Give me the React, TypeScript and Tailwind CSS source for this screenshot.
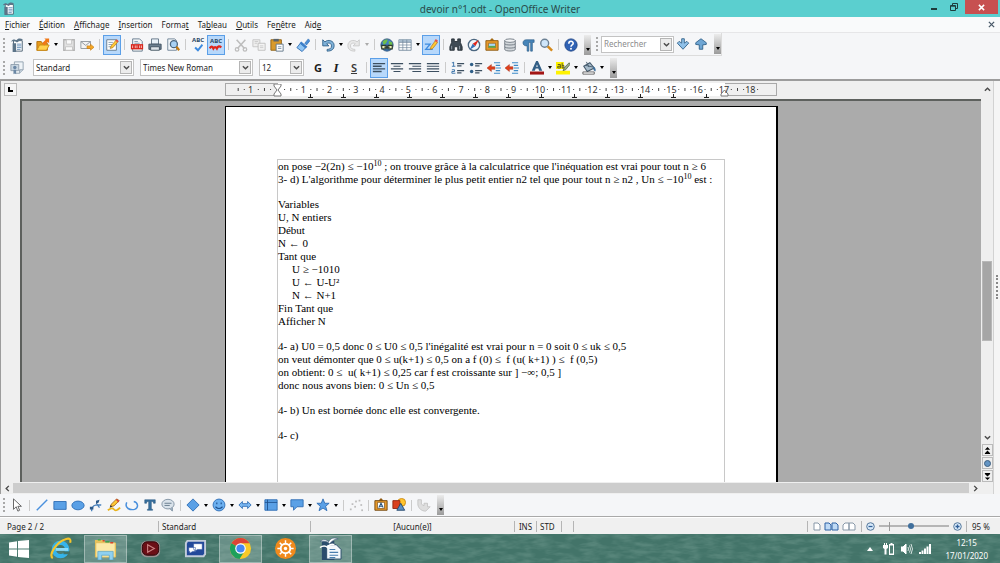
import type { ReactNode } from 'react';

const BLUE = '#5aa0e6';
const EDGE = '#2d6cb4';
const INK = '#3c4f60';

const icons: Record<string, ReactNode> = {
  writer: (
    <>
      <path d="M4 3h10v12H4z" fill="#fff" stroke="#44596b" />
      <path d="M1 4c2-3 5-3 6-1 2-3 5-3 8-1-3 0-4 1-7 3-3-2-4-1-7-1z" fill="#5c7488" />
      <path d="M3 6h4v10H3z" fill="#5c7488" />
      <path d="M8 7h5M8 9h5M8 11h5M8 13h4" stroke="#5b88b5" />
    </>
  ),
  open: (
    <>
      <path d="M1 14V4h5l1 2h6v8z" fill="#e69a1c" stroke="#b06f0c" />
      <path d="M1 14l3-6h11l-3 6z" fill="#ffd24d" stroke="#c98713" />
      <path d="M7 6l4-4-1.500-1.500H15V6l-1.500-1.500-4 4z" fill="#f07818" />
    </>
  ),
  save: (
    <>
      <path d="M2 2h12v12H2z" fill="#e2e2e2" stroke="#b4b4b4" strokeWidth="1.5" />
      <path d="M5 2h6v5H5zM4 10h8v4H4z" fill="#fafafa" stroke="#c2c2c2" />
    </>
  ),
  mail: (
    <>
      <path d="M1 4h11v8H1z" fill="#f3f3f3" stroke="#8b9299" />
      <path d="M1 4l5.500 4.500L12 4" fill="none" stroke="#8b9299" />
      <path d="M8 9h4V7l4 3.500-4 3.500v-2H8z" fill="#f5a623" stroke="#c47a10" strokeWidth=".7" />
    </>
  ),
  edit: (
    <>
      <path d="M2 2h11v12H2z" fill="#fff" stroke="#5c7488" />
      <path d="M4 5h5M4 7.500h4M4 10h3" stroke="#7b93a8" />
      <path d="M6 12l1-3 6-7 2 2-6 7z" fill="#ffc933" stroke="#b3741a" strokeWidth=".8" />
      <path d="M12 3l1.500-1.500 2 2L14 5z" fill="#e2554a" />
    </>
  ),
  pdf: (
    <>
      <path d="M3 1h8l3 3v11H3z" fill="#f4f6f8" stroke="#607588" />
      <path d="M5 4h4M5 6h6" stroke="#7b93a8" />
      <path d="M1 7h14v6H1z" fill="#d8261c" />
      <path d="M3 8.500v3M6 8.500v3M8 8.500v3M11 8.500v3M13 8.500v3" stroke="#fff" strokeWidth=".8" />
    </>
  ),
  print: (
    <>
      <path d="M4 1h8v6H4z" fill="#e9f1f8" stroke="#5c6f80" />
      <path d="M1 7h14v6H1z" fill="#6c7f90" stroke="#3e4f5e" />
      <path d="M3 10h10v4H3z" fill="#dfe5ea" stroke="#3e4f5e" />
    </>
  ),
  preview: (
    <>
      <path d="M2 1h8l2 2v11H2z" fill="#f2f6fa" stroke="#6a7f92" />
      <circle cx="9" cy="7" r="4" fill="#a9d2f5" stroke="#4b6780" strokeWidth="1.500" />
      <path d="M12 10l3 4" stroke="#c47a10" strokeWidth="2.500" />
    </>
  ),
  check: <path d="M2 8l5 5 8-10" fill="none" stroke="#3d8be0" strokeWidth="3.500" />,
  wave: <path d="M1 13q2-4 4 0 2-3 4 0 2-4 5-1" fill="none" stroke="#e0261c" strokeWidth="2.600" />,
  cut: (
    <>
      <path d="M3 2l9 10M13 2L4 12" stroke="#bdbdbd" strokeWidth="1.800" />
      <circle cx="3.500" cy="13" r="2" fill="none" stroke="#bdbdbd" strokeWidth="1.500" />
      <circle cx="12.500" cy="13" r="2" fill="none" stroke="#bdbdbd" strokeWidth="1.500" />
    </>
  ),
  copy: (
    <>
      <path d="M1 2h8v8H1z" fill="#eee" stroke="#c4c4c4" />
      <path d="M7 6h8v8H7z" fill="#f4f4f4" stroke="#bdbdbd" />
      <path d="M3 4h4M3 6h3M9 9h4M9 11h4" stroke="#c8c8c8" />
    </>
  ),
  paste: (
    <>
      <path d="M1 2h12v12H1z" fill="#d99a2b" stroke="#8d5f14" />
      <path d="M4 1h6v3H4z" fill="#59636c" />
      <path d="M7 7h8v8H7z" fill="#fff" stroke="#5b7186" />
      <path d="M9 10h4M9 12h4" stroke="#7b93a8" />
    </>
  ),
  brush: (
    <>
      <path d="M10 6l4-5 2 2-4 5z" fill="#4b8fd6" stroke="#2d6cb4" strokeWidth=".7" />
      <path d="M5 6l6 5-4 4.500L1 11z" fill="#8fc6f5" stroke="#2d6cb4" />
      <path d="M6 4l7 6-2 2L4 6z" fill="#3b7fc9" />
    </>
  ),
  undo: <path d="M2 2v7h7L6.500 6.500C9 5 12 6 12 9s-2 4-5 4v2c5 0 8-2 8-6.500C15 3 8 1 4.500 4.500z" fill="#7fb2d9" stroke="#2f5f88" />,
  redo: <path d="M14 2v7H7l2.500-2.500C7 5 4 6 4 9s2 4 5 4v2c-5 0-8-2-8-6.500C1 3 8 1 11.500 4.500z" fill="#e8e8e8" stroke="#c8c8c8" />,
  globe: (
    <>
      <circle cx="8" cy="8" r="7" fill="#3e7fc4" stroke="#274d73" />
      <path d="M3 4q3-3 6-2l-2 4-3 2zM10 3l4 2v4l-4-2z" fill="#6fbf4a" />
      <path d="M2 8.500h5v4H2zM9 8.500h5v4H9z" fill="#e6ecb4" stroke="#2c3a30" strokeWidth="1.300" />
      <path d="M5 10.500h6" stroke="#2c3a30" strokeWidth="1.500" />
    </>
  ),
  table: (
    <>
      <path d="M1 2h14v12H1z" fill="#fff" stroke="#71879b" />
      <path d="M1 2h14v3H1z" fill="#a8bccd" />
      <path d="M1 5h14M1 8h14M1 11h14M5.500 2v12M10 2v12" stroke="#71879b" strokeWidth=".8" />
    </>
  ),
  draw: (
    <>
      <path d="M1 7h6L2 13h8" fill="none" stroke="#3d8be0" strokeWidth="1.500" />
      <path d="M7 13l1-3 5-7 2.500 2-5.500 7z" fill="#ffc933" stroke="#b3741a" strokeWidth=".8" />
      <path d="M12 3l1.500-2 2.500 2-1.500 2z" fill="#e2554a" />
    </>
  ),
  binoculars: (
    <>
      <path d="M3 1h3v3h4V1h3v4l2 5v4h-5v-4H6v4H1v-4l2-5z" fill="#3f4b55" stroke="#252e36" />
      <path d="M3 9v4M12 9v4" stroke="#8f9ca7" />
    </>
  ),
  compass: (
    <>
      <circle cx="8" cy="8" r="6.500" fill="#eef5fb" stroke="#4b6780" strokeWidth="1.500" />
      <path d="M13.500 2L9.500 9.500 6.500 6.500z" fill="#e0261c" />
      <path d="M3 13.500l3.500-7 3 3z" fill="#3470b8" />
    </>
  ),
  picture: (
    <>
      <path d="M8 0l3 3H5z" fill="#a56a12" />
      <path d="M1 3h14v11H1z" fill="#e6992a" stroke="#8d5810" />
      <path d="M4 6h8v5H4z" fill="#a8d5f7" stroke="#8d5810" strokeWidth=".7" />
      <path d="M4 9h8v2H4z" fill="#59a84a" />
    </>
  ),
  db: (
    <>
      <path d="M2 3v10c0 2.500 12 2.500 12 0V3z" fill="#d3d8dc" stroke="#6b757e" />
      <ellipse cx="8" cy="3" rx="6" ry="2" fill="#f2f4f6" stroke="#6b757e" />
      <path d="M2 6.500c0 2 12 2 12 0M2 10c0 2 12 2 12 0" fill="none" stroke="#6b757e" />
    </>
  ),
  pilcrow: <path d="M15 2H6C1 2 1 9 6 9h1v6h2V5h2v10h2V5h2z" fill="#4684b8" stroke="#2c5a84" strokeWidth=".7" />,
  zoom: (
    <>
      <circle cx="6.500" cy="6" r="4.500" fill="#cfe6fa" stroke="#6c8194" strokeWidth="1.600" />
      <path d="M10 9.500l5 5" stroke="#d58a1c" strokeWidth="2.800" />
    </>
  ),
  help: (
    <>
      <circle cx="8" cy="8" r="7" fill="#2f62b5" stroke="#1d4485" />
      <path d="M5.500 6.500c0-3.500 5-3.500 5-.5 0 2-2.500 1.800-2.500 4" fill="none" stroke="#fff" strokeWidth="1.800" />
      <circle cx="8" cy="12.300" r="1.100" fill="#fff" />
    </>
  ),
  down: <path d="M6.500 2h3v5l3-2 2 2L8 14 1.500 7l2-2 3 2z" fill="#8fc0e8" stroke="#2f6088" />,
  up: <path d="M6 14h4V9l4-.5V6.500L8 2 2 6.500v2L6 9z" fill="#6fa6d4" stroke="#2f6088" />,
  styles: (
    <>
      <path d="M5 1h10v9l-4 4H5z" fill="#eef3f7" stroke="#8d9dab" />
      <path d="M11 14v-4h4" fill="#c9d6e0" stroke="#8d9dab" />
      <path d="M1 4h9v7H1z" fill="#c9d6e0" stroke="#8d9dab" />
      <circle cx="5.500" cy="7.500" r="2" fill="#6b88a6" />
      <path d="M4 10v5l1.500-1L7 15v-5" fill="#6b88a6" />
    </>
  ),
  left: <path d="M1 3h14M1 6h10M1 9h14M1 12h10" stroke={INK} strokeWidth="1.500" />,
  center: <path d="M1 3h14M4 6h8M1 9h14M4 12h8" stroke={INK} strokeWidth="1.300" />,
  right: <path d="M1 3h14M5 6h10M1 9h14M5 12h10" stroke={INK} strokeWidth="1.300" />,
  justify: <path d="M1 3h14M1 6h14M1 9h14M1 12h14" stroke={INK} strokeWidth="1.300" />,
  numbers: (
    <>
      <path d="M3 1v5M1 2h2M1 6h4M1 10h3v2H1v2h4" fill="none" stroke="#2f6ca5" />
      <path d="M7 3h8M7 5.500h5M7 11h8M7 13.500h5" stroke={INK} strokeWidth="1.300" />
    </>
  ),
  bullets: (
    <>
      <circle cx="3" cy="4" r="2" fill="#2f5f88" />
      <circle cx="3" cy="12" r="2" fill="#2f5f88" />
      <path d="M7 3h8M7 5.500h5M7 11h8M7 13.500h5" stroke={INK} strokeWidth="1.300" />
    </>
  ),
  outdent: (
    <>
      <path d="M8 2h7M10 5h5M10 8h6M10 11h5M8 14h7" stroke="#3d8bc8" strokeWidth="1.300" />
      <path d="M0 8l5-4v2.500h4v3H5V12z" fill="#e0401c" stroke="#a32a10" strokeWidth=".5" />
    </>
  ),
  fontColor: (
    <>
      <path d="M2 11L7 0h2l5 11h-3.500l-1-2.500h-3L5.500 11z" fill="#335f86" />
      <path d="M7 6.500h2L8 4z" fill="#fff" />
      <path d="M0 12h16v3.500H0z" fill="#a31515" />
    </>
  ),
  highlight: (
    <>
      <path d="M0 11h16v4.500H0zM0 1h9v8H0z" fill="#fff200" />
      <path d="M2 4h3v4H2V6h3M7 2v6h2V5H7" fill="none" stroke="#4a4a20" />
      <path d="M8 11l2-4 5-5 1 2-5 6z" fill="#9cae8a" stroke="#4a5a3a" strokeWidth=".8" />
    </>
  ),
  fill: (
    <>
      <path d="M2 6l7-4 5 6-8 4z" fill="#a8bccb" stroke="#44596b" strokeWidth="1.200" />
      <path d="M5 1l3 6M4 5l9 2" stroke="#44596b" />
      <path d="M13 6q4 3 2 6-3-1-2-6z" fill="#3d6f9c" />
      <path d="M1 12.500h13v2.500H1z" fill="#fff" stroke="#333" strokeWidth=".8" />
    </>
  ),
  pointer: <path d="M4 1v12l3-3 2 5 2-1-2-4.500h4z" fill="#fff" stroke="#555" />,
  line: <path d="M2 14L14 2" stroke="#4a90dd" strokeWidth="1.600" />,
  rect: <path d="M1 4h14v9H1z" fill={BLUE} stroke={EDGE} />,
  ellipse: <ellipse cx="8" cy="8.500" rx="7" ry="5" fill={BLUE} stroke={EDGE} />,
  connector: (
    <>
      <path d="M3 15C3 9 6 7 14 8M9 7l3 4" fill="none" stroke="#4a82bd" strokeWidth="1.500" />
      <path d="M1 10h4v3H1zM8 3l4-1-1 3-3 2z" fill="#2d5a8a" />
    </>
  ),
  pencil: (
    <>
      <path d="M1 14q5-4 7-1t7-2" fill="none" stroke="#e9b31c" strokeWidth="2" />
      <path d="M4 10l1-3 6-6 3 2-6 6z" fill="#ffc933" stroke="#a3641a" />
      <path d="M11 1l3 2-1 2-3-3z" fill="#d4493c" />
      <path d="M3 11l1-3 2 2z" fill="#333" />
    </>
  ),
  freeform: <path d="M2 5c-3 7 4 9 9 8 5-2 4-8-1-9" fill="none" stroke="#4a90dd" strokeWidth="1.700" />,
  textT: <path d="M2 2h12v4h-2l-.500-2H9.500v8.500l1.500.5v1H5v-1l1.500-.5V4h-2L4 6H2z" fill="#37709f" stroke="#25527a" strokeWidth=".6" />,
  comment: (
    <>
      <ellipse cx="8" cy="7" rx="7" ry="5.500" fill="#d9e2ea" stroke="#7d8fa0" />
      <path d="M10 12l3 3v-4" fill="#9fb1c1" stroke="#7d8fa0" />
      <path d="M4 6h8M4 8.500h6" stroke="#5d7285" />
    </>
  ),
  diamond: <path d="M8 1l7 7-7 7-7-7z" fill={BLUE} stroke={EDGE} />,
  smile: (
    <>
      <circle cx="8" cy="8" r="6.800" fill="#6cb0f0" stroke={EDGE} />
      <path d="M5.500 5v2M10.500 5v2M4 10q4 4 8 0" fill="none" stroke="#1d4f8c" strokeWidth="1.300" />
    </>
  ),
  arrows: <path d="M1 8l4-4v2.500h6V4l4 4-4 4V9.500H5V12z" fill="#7db9f2" stroke={EDGE} />,
  flow: (
    <>
      <path d="M1 2h14v12H1z" fill={BLUE} stroke={EDGE} />
      <path d="M4 2v12M1 5h14" stroke="#1d4f8c" />
    </>
  ),
  bubble: <path d="M1 2h14v8H8l-4 4v-4H1z" fill={BLUE} stroke={EDGE} />,
  star: <path d="M8 1l2 5h5l-4 3.500 1.500 5L8 11.500 3.500 14.500 5 9.500 1 6h5z" fill={BLUE} stroke={EDGE} />,
  points: (
    <>
      {[[1, 12], [3, 6], [6, 9], [7, 3], [11, 2], [13, 7], [14, 13]].map(([x, y]) => (
        <rect key={x} x={x} y={y} width="2" height="2" fill="#bdbdbd" />
      ))}
    </>
  ),
  fontwork: (
    <>
      <path d="M8 0l3 3H5z" fill="#8d5810" />
      <path d="M1 3h14v11H1z" fill="#e6992a" stroke="#70440a" />
      <path d="M4 5h8v7H4z" fill="#fff" stroke="#70440a" strokeWidth=".7" />
      <path d="M5.500 11L8 6l2.500 5M6.500 9.500h3" fill="none" stroke="#25527a" strokeWidth="1.200" />
    </>
  ),
  gallery: (
    <>
      <circle cx="11" cy="5" r="4.500" fill="#ffc52e" stroke="#c98713" />
      <path d="M1 3h8v9H1z" fill="#d9401f" stroke="#8f2411" />
      <path d="M10 6l4.500 8h-9z" fill="#5a8fc4" stroke="#22466b" />
    </>
  ),
  extrusion: <path d="M1 2h4v5l3 2V6h4v4h3l-5 5c-5 0-8-3-9-7z" fill="#dedede" stroke="#c2c2c2" />,
};

function Icon({ name, size = 'size-[14px]' }: { name: string; size?: string }) {
  return (
    <svg viewBox="0 0 16 16" className={`${size} shrink-0`} aria-hidden="true">
      {icons[name]}
    </svg>
  );
}

function Tool({ label, icon, active, children }: { label: string; icon?: string; active?: boolean; children?: ReactNode }) {
  return (
    <button
      type="button"
      aria-label={label}
      className={`flex h-[20px] w-[18px] shrink-0 flex-col items-center justify-center border ${
        active ? 'border-[#5b9fe8] bg-[#b7d8fb]' : 'border-transparent'
      }`}
    >
      {icon ? <Icon name={icon} /> : children}
    </button>
  );
}

function Caret({ label, dim }: { label: string; dim?: boolean }) {
  return (
    <button type="button" aria-label={label} className="flex h-[19px] w-2 shrink-0 items-center justify-center">
      <svg viewBox="0 0 4 3" className={`h-[3px] w-1 ${dim ? 'fill-[#aaa]' : 'fill-black'}`}>
        <path d="M0 0h4L2 3z" />
      </svg>
    </button>
  );
}

function Sep() {
  return (
    <span className="flex w-[7px] shrink-0 justify-center">
      <span className="h-[11px] w-px bg-[#cbcbcb]" />
    </span>
  );
}

function Grip() {
  return <span className="mr-[3px] ml-[3px] h-[14px] w-0 shrink-0 border-l-2 border-dotted border-[#a8a8a8]" />;
}

function More({ label }: { label: string }) {
  return (
    <button
      type="button"
      aria-label={label}
      className="ml-1 flex h-[20px] w-[7px] shrink-0 items-end justify-center bg-linear-to-b from-[#ececec] to-[#9b9b9b] pb-1"
    >
      <svg viewBox="0 0 4 3" className="h-[3px] w-1">
        <path d="M0 0h4L2 3z" />
      </svg>
    </button>
  );
}

function Chevron({ turn = '' }: { turn?: string }) {
  return (
    <svg viewBox="0 0 8 8" className={`size-[7px] ${turn}`} aria-hidden="true">
      <path d="M1 2.500l3 3 3-3" fill="none" stroke="#4a4a4a" strokeWidth="1.600" />
    </svg>
  );
}

function Combo({ label, value, width }: { label: string; value: string; width: string }) {
  return (
    <span className={`relative flex h-[17px] shrink-0 items-center border border-[#c3c3c3] bg-white p-px ${width}`}>
      <select aria-label={label} className="h-full w-full appearance-none bg-white pl-px leading-none outline-none">
        <option>{value}</option>
      </select>
      <span className="pointer-events-none absolute inset-y-px right-px flex w-3 items-center justify-center border border-[#b5b5b5] bg-[#ececec]">
        <Chevron />
      </span>
    </span>
  );
}

const menus: [string, string, string][] = [
  ['', 'F', 'ichier'],
  ['', 'É', 'dition'],
  ['', 'A', 'ffichage'],
  ['', 'I', 'nsertion'],
  ['Forma', 't', ''],
  ['Ta', 'b', 'leau'],
  ['', 'O', 'utils'],
  ['Fe', 'n', 'être'],
  ['Aid', 'e', ''],
];

const rulerMarks = ['1', '', ...Array.from({ length: 18 }, (_, i) => String(i + 1))];

function Ruler() {
  return (
    <div className="relative mx-auto flex h-[13px] w-[552px] items-center border border-[#a9a9a9] bg-[#f0f0f0] px-3">
      <span className="absolute -inset-y-px left-[52px] w-[447px] bg-white" />
      <svg viewBox="0 0 552 16" className="absolute top-0 -left-px h-4 w-[552px]" aria-hidden="true">
        {rulerMarks.map((_, i) => {
          const x = (i + 1) * 26.28;
          return (
            <g key={i} fill="#444">
              <rect x={x - 13.600} y="4" width="1" height="3" />
              <rect x={x - 7.500} y="5" width="1" height="1" />
              <rect x={x + 6.500} y="5" width="1" height="1" />
            </g>
          );
        })}
        {Array.from({ length: 13 }, (_, i) => (
          <path key={i} d={`M${85.5 + i * 33} 10v3M${83 + i * 33} 13.500h5`} stroke="#222" />
        ))}
        <path d="M49 0h7v2l-3 4 3 4v2h-7v-2l3-4-3-4z" fill="#fff" stroke="#777" />
        <path d="M496 12h7v-2l-3.500-4-3.500 4z" fill="#fff" stroke="#777" />
      </svg>
      {rulerMarks.map((mark, i) => (
        <span key={i} className="relative flex-1 text-center text-[9px] leading-none text-[#333]">
          {mark}
        </span>
      ))}
    </div>
  );
}

function Line({ children, indent }: { children: ReactNode; indent?: boolean }) {
  return <p className={`h-[13px] whitespace-pre ${indent ? 'pl-[14px]' : ''}`}>{children}</p>;
}

function Blank() {
  return <div className="h-3" />;
}

function Sup({ children }: { children: ReactNode }) {
  return <sup className="top-0 align-[4px] text-[8px] leading-none">{children}</sup>;
}

function Task({ label, open, children }: { label: string; open?: boolean; children: ReactNode }) {
  return (
    <button
      type="button"
      aria-label={label}
      className={`flex h-[28px] w-[43px] items-center justify-center border ${
        open ? 'border-white/35 bg-white/20' : 'border-transparent'
      }`}
    >
      <svg viewBox="0 0 24 24" className="size-[23px]" aria-hidden="true">
        {children}
      </svg>
    </button>
  );
}

export default function App() {
  return (
    <div className="flex min-h-screen flex-col bg-[#f5f6f8] font-['Noto_Sans','Open_Sans',sans-serif] text-[8px] text-[#1c1c1c]">
      <header className="grid h-[17px] grid-cols-[1fr_auto_1fr] items-center bg-[#5bcfcf]">
        <span className="pl-[2px]">
          <Icon name="writer" size="size-[13px]" />
        </span>
        <h1 className="text-[10px] leading-none text-[#2a4a4a]">devoir n°1.odt - OpenOffice Writer</h1>
        <div className="flex h-full justify-end pr-[2px]">
          <button type="button" aria-label="Réduire" className="flex w-[18px] items-center justify-center">
            <span className="h-[2px] w-[6px] bg-[#1e3c3c]" />
          </button>
          <button type="button" aria-label="Restaurer" className="flex w-[22px] items-center justify-center pb-[3px]">
            <svg viewBox="0 0 8 8" className="size-2" fill="none" stroke="#1e3c3c">
              <path d="M.5 2.500h5v5h-5zM2.500 2V.5h5v5H6M.5 3.200h5" />
            </svg>
          </button>
          <button type="button" aria-label="Fermer" className="flex h-[14px] w-[33px] items-center justify-center bg-[#c75050]">
            <svg viewBox="0 0 8 8" className="size-[7px]" stroke="#fff" strokeWidth="1.700">
              <path d="M1 1l6 6M7 1L1 7" />
            </svg>
          </button>
        </div>
      </header>

      <nav className="flex h-4 items-center gap-[9px] border-b border-[#e6e6e8] bg-[#f9fafb] pl-[5px]">
        {menus.map(([a, key, b]) => (
          <button key={a + key + b} type="button" className="leading-none">
            {a}
            <u>{key}</u>
            {b}
          </button>
        ))}
        <button type="button" aria-label="Fermer le document" className="mr-[5px] ml-auto">
          <svg viewBox="0 0 8 8" className="size-[7px]" stroke="#4a5a6a" strokeWidth="1.500">
            <path d="M1 1l6 6M7 1L1 7" />
          </svg>
        </button>
      </nav>

      <div className="flex h-[23px] items-center">
        <Grip />
        <Tool label="Nouveau" icon="writer" />
        <Caret label="Types de document" />
        <Tool label="Ouvrir" icon="open" />
        <Caret label="Documents récents" />
        <Tool label="Enregistrer" icon="save" />
        <Tool label="Envoyer par e-mail" icon="mail" />
        <Sep />
        <Tool label="Éditer le fichier" icon="edit" active />
        <Sep />
        <Tool label="Exporter en PDF" icon="pdf" />
        <Tool label="Imprimer" icon="print" />
        <Tool label="Aperçu" icon="preview" />
        <Sep />
        <Tool label="Orthographe">
          <span className="text-[6px] leading-[5px] font-bold text-[#2b4a66]">ABC</span>
          <Icon name="check" size="size-[9px]" />
        </Tool>
        <Tool label="Vérification automatique" active>
          <span className="text-[6px] leading-[6px] font-bold text-[#2b4a66]">ABC</span>
          <svg viewBox="0 8 16 8" className="h-[7px] w-[14px]">
            {icons.wave}
          </svg>
        </Tool>
        <Sep />
        <Tool label="Couper" icon="cut" />
        <Tool label="Copier" icon="copy" />
        <Tool label="Coller" icon="paste" />
        <Caret label="Options de collage" />
        <Tool label="Appliquer le format" icon="brush" />
        <Sep />
        <Tool label="Annuler" icon="undo" />
        <Caret label="Liste des annulations" />
        <Tool label="Restaurer" icon="redo" />
        <Caret label="Liste des restaurations" dim />
        <Sep />
        <Tool label="Hyperlien" icon="globe" />
        <Tool label="Tableau" icon="table" />
        <Caret label="Taille du tableau" />
        <Tool label="Fonctions de dessin" icon="draw" active />
        <Sep />
        <Tool label="Rechercher et remplacer" icon="binoculars" />
        <Tool label="Navigateur" icon="compass" />
        <Tool label="Galerie" icon="picture" />
        <Tool label="Sources de données" icon="db" />
        <Tool label="Caractères non imprimables" icon="pilcrow" />
        <Tool label="Zoom" icon="zoom" />
        <Sep />
        <Tool label="Aide" icon="help" />
        <More label="Plus d'outils" />
        <div className="flex h-full items-center border-r border-b border-[#dcdcdc] pl-[2px]">
          <Grip />
          <span className="flex h-[17px] w-[73px] border border-[#c3c3c3] bg-white p-px">
            <input aria-label="Rechercher" placeholder="Rechercher" className="w-full min-w-0 pl-px outline-none placeholder:text-[#8c8c8c]" />
            <button type="button" aria-label="Recherches récentes" className="flex w-3 shrink-0 items-center justify-center border border-[#b5b5b5] bg-[#ececec]">
              <Chevron />
            </button>
          </span>
          <Tool label="Suivant" icon="down" />
          <Tool label="Précédent" icon="up" />
          <More label="Plus d'options de recherche" />
        </div>
      </div>

      <div className="flex h-[23px] items-center">
        <Grip />
        <Tool label="Styles et formatage" icon="styles" />
        <div className="flex gap-[6px] pr-[5px] pl-[7px]">
          <Combo label="Style" value="Standard" width="w-[101px]" />
          <Combo label="Police" value="Times New Roman" width="w-[113px]" />
          <Combo label="Taille" value="12" width="w-[45px]" />
        </div>
        <Tool label="Gras">
          <b className="text-[11px] leading-none">G</b>
        </Tool>
        <Tool label="Italique">
          <i className="font-['Liberation_Serif',serif] text-[13px] leading-none font-bold">I</i>
        </Tool>
        <Tool label="Souligné">
          <span className="text-[11px] leading-none font-semibold text-[#3a3a3a] underline">S</span>
        </Tool>
        <Sep />
        <Tool label="Aligner à gauche" icon="left" active />
        <Tool label="Centrer" icon="center" />
        <Tool label="Aligner à droite" icon="right" />
        <Tool label="Justifier" icon="justify" />
        <Sep />
        <Tool label="Numérotation" icon="numbers" />
        <Tool label="Puces" icon="bullets" />
        <Tool label="Réduire le retrait" icon="outdent" />
        <Tool label="Augmenter le retrait" icon="outdent" />
        <Sep />
        <Tool label="Couleur de police" icon="fontColor" />
        <Caret label="Choisir la couleur de police" />
        <Tool label="Surlignage" icon="highlight" />
        <Caret label="Choisir le surlignage" />
        <Tool label="Arrière-plan" icon="fill" />
        <Caret label="Choisir l'arrière-plan" />
        <More label="Plus d'options de format" />
      </div>

      <div className="flex flex-1 border-t-2 border-l border-[#9c9c9c] bg-[#efefef]">
        <div className="flex flex-1 flex-col">
          <div className="flex flex-1">
            <div className="w-[19px] shrink-0 pt-[2px] pl-[3px]">
              <button type="button" aria-label="Type de tabulation" className="flex size-[13px] items-center justify-center border border-[#bbb] bg-[#f6f6f6]">
                <span className="size-[5px] border-b-2 border-l-2 border-black" />
              </button>
            </div>
            <main className="flex flex-1 flex-col">
              <div className="h-[18px] pt-[2px]">
                <Ruler />
              </div>
              <div className="flex flex-1 flex-col border-t-2 border-l-2 border-[#5d605d] bg-[#ababab] pt-[5px]">
                <article className="mx-auto flex w-[553px] flex-1 flex-col border-t border-r-2 border-l border-black bg-white px-[51px] pt-[52px]">
                  <div className="flex-1 border-x border-t border-[#c8c8c8] font-['Liberation_Serif',serif] text-[11px] leading-[13px] text-black">
                    <Line>
                      on pose −2(2n) ≤ −10<Sup>10</Sup> ; on trouve grâce à la calculatrice que l'inéquation est vrai pour tout n ≥ 6
                    </Line>
                    <Line>
                      3- d) L'algorithme pour déterminer le plus petit entier n2 tel que pour tout n ≥ n2 , Un ≤ −10<Sup>10</Sup> est :
                    </Line>
                    <Blank />
                    <Line>Variables</Line>
                    <Line>U, N entiers</Line>
                    <Line>Début</Line>
                    <Line>N ← 0</Line>
                    <Line>Tant que</Line>
                    <Line indent>U ≥ −1010</Line>
                    <Line indent>U ← U-U²</Line>
                    <Line indent>N ← N+1</Line>
                    <Line>Fin Tant que</Line>
                    <Line>Afficher N</Line>
                    <Blank />
                    <Line>4- a) U0 = 0,5 donc 0 ≤ U0 ≤ 0,5 l'inégalité est vrai pour n = 0 soit 0 ≤ uk ≤ 0,5</Line>
                    <Line>on veut démonter que 0 ≤ u(k+1) ≤ 0,5 on a f (0) ≤  f (u( k+1) ) ≤  f (0,5)</Line>
                    <Line>on obtient: 0 ≤  u( k+1) ≤ 0,25 car f est croissante sur ] −∞; 0,5 ]</Line>
                    <Line>donc nous avons bien: 0 ≤ Un ≤ 0,5</Line>
                    <Blank />
                    <Line>4- b) Un est bornée donc elle est convergente.</Line>
                    <Blank />
                    <Line>4- c)</Line>
                  </div>
                </article>
              </div>
            </main>
            <div className="flex w-3 shrink-0 flex-col items-center gap-px">
              <button type="button" aria-label="Défiler vers le haut" className="flex h-4 w-full items-center justify-center">
                <Chevron turn="rotate-180" />
              </button>
              <div className="flex w-full flex-1 flex-col px-px">
                <span className="flex-[166]" />
                <span className="flex-[79] border border-[#b8b8b8] bg-[#a6a6a6]" />
                <span className="flex-[91]" />
              </div>
              <button type="button" aria-label="Défiler vers le bas" className="flex h-3 w-full items-center justify-center">
                <Chevron />
              </button>
              <button type="button" aria-label="Page précédente" className="flex h-3 w-[11px] items-center justify-center border border-[#bbb]">
                <svg viewBox="0 0 8 8" className="size-[7px]">
                  <path d="M4 0l3 3H1zM4 4l3 3H1zM1 7h6v1H1z" />
                </svg>
              </button>
              <button type="button" aria-label="Navigation" className="flex h-3 w-[11px] items-center justify-center border border-[#bbb]">
                <span className="size-[7px] rounded-full border border-[#3d5f80] bg-[#6495c4]" />
              </button>
              <button type="button" aria-label="Page suivante" className="flex h-3 w-[11px] items-center justify-center border border-[#bbb]">
                <svg viewBox="0 0 8 8" className="size-[7px]">
                  <path d="M1 0h6v1H1zM1 1h6L4 4zM1 5h6L4 8z" />
                </svg>
              </button>
            </div>
          </div>
          <div className="flex h-3 items-center">
            <button type="button" aria-label="Défiler à gauche" className="flex w-3 justify-center">
              <Chevron turn="rotate-90" />
            </button>
            <span className="h-[10px] flex-1 bg-[#cdcdcd]" />
            <button type="button" aria-label="Défiler à droite" className="mr-3 flex w-3 justify-center">
              <Chevron turn="-rotate-90" />
            </button>
          </div>
        </div>
        <div className="flex w-[7px] shrink-0 items-start justify-center border-l border-[#d2d2d2] bg-[#f5f5f5] pt-[194px]">
          <span className="h-6 w-0 border-l-2 border-dotted border-[#888]" />
        </div>
      </div>

      <div className="flex h-[23px] items-center border-b border-[#a9a9a9]">
        <Grip />
        <Tool label="Sélection" icon="pointer" />
        <Sep />
        <Tool label="Ligne" icon="line" />
        <Tool label="Rectangle" icon="rect" />
        <Tool label="Ellipse" icon="ellipse" />
        <Tool label="Polygone" icon="connector" />
        <Tool label="Courbe" icon="pencil" />
        <Tool label="Arc" icon="freeform" />
        <Tool label="Texte" icon="textT" />
        <Tool label="Légende" icon="comment" />
        <Sep />
        <Tool label="Formes de base" icon="diamond" />
        <Caret label="Choix des formes de base" />
        <Tool label="Formes de symbole" icon="smile" />
        <Caret label="Choix des symboles" />
        <Tool label="Flèches pleines" icon="arrows" />
        <Caret label="Choix des flèches" />
        <Tool label="Organigrammes" icon="flow" />
        <Caret label="Choix des organigrammes" />
        <Tool label="Légendes" icon="bubble" />
        <Caret label="Choix des légendes" />
        <Tool label="Étoiles" icon="star" />
        <Caret label="Choix des étoiles" />
        <Sep />
        <Tool label="Points" icon="points" />
        <Sep />
        <Tool label="Galerie Fontwork" icon="fontwork" />
        <Tool label="À partir d'un fichier" icon="gallery" />
        <Sep />
        <Tool label="Extrusion" icon="extrusion" />
        <More label="Plus d'outils de dessin" />
      </div>

      <footer className="flex h-[17px] items-center border-t border-white bg-[#f0f0f0] leading-[11px]">
        <span className="w-[159px] border-r border-[#b5b5b5] pl-[7px]">Page 2 / 2</span>
        <span className="w-[152px] border-r border-[#b5b5b5] pl-[3px]">Standard</span>
        <span className="w-[204px] border-r border-[#b5b5b5] text-center">[Aucun(e)]</span>
        <span className="w-[22px] border-r border-[#b5b5b5] text-center">INS</span>
        <span className="w-[25px] border-r border-[#b5b5b5] pl-[3px]">STD</span>
        <span className="h-[11px] w-3 border-r border-[#b5b5b5]" />
        <div className="ml-auto flex h-[11px] items-center border-x border-[#b5b5b5] px-[5px]">
          <svg viewBox="0 0 43 9" className="h-[9px] w-[43px]" aria-hidden="true">
            <path d="M1 1h4l2 2v5H1z" fill="#fff" stroke="#8898a8" />
            <path d="M12 1h4l2 2v5h-6zM19 1h4l2 2v5h-6z" fill="#bfdaf5" stroke="#2f62a5" />
            <path d="M30 8V3l2-2h4v7zM36 1h4l2 2v5h-6z" fill="#fff" stroke="#8898a8" />
          </svg>
        </div>
        <div className="flex h-[11px] items-center gap-1 border-r border-[#b5b5b5] px-1">
          <svg viewBox="0 0 9 9" className="size-[9px]" aria-hidden="true">
            <circle cx="4.500" cy="4.500" r="3.800" fill="#d9eafa" stroke="#55779a" />
            <path d="M2.500 4.500h4" stroke="#2f5f98" strokeWidth="1.300" />
          </svg>
          <span className="relative flex">
            <input
              type="range"
              aria-label="Zoom"
              defaultValue={46}
              className="h-[9px] w-[70px] appearance-none bg-[linear-gradient(#b5b5b5,#b5b5b5)] bg-[length:100%_2px] bg-center bg-no-repeat [&::-webkit-slider-thumb]:size-[6px] [&::-webkit-slider-thumb]:appearance-none [&::-webkit-slider-thumb]:rounded-full [&::-webkit-slider-thumb]:bg-[#3f6f9c]"
            />
            <span className="pointer-events-none absolute inset-y-0 left-[10px] w-px bg-[#999]" />
          </span>
          <svg viewBox="0 0 9 9" className="size-[9px]" aria-hidden="true">
            <circle cx="4.500" cy="4.500" r="3.800" fill="#d9eafa" stroke="#55779a" />
            <path d="M2.500 4.500h4M4.500 2.500v4" stroke="#2f5f98" strokeWidth="1.300" />
          </svg>
        </div>
        <span className="w-[33px] pl-[5px]">95 %</span>
      </footer>

      <div className="relative flex h-[29px] items-center bg-[#437469]">
        <svg className="absolute inset-0 h-full w-full opacity-15" aria-hidden="true">
          <filter id="chalk">
            <feTurbulence type="fractalNoise" baseFrequency="0.06 0.2" numOctaves="3" seed="4" />
            <feColorMatrix values="0 0 0 0 .6  0 0 0 0 .8  0 0 0 0 .72  2.500 0 0 0 -.9" />
          </filter>
          <rect width="100%" height="100%" filter="url(#chalk)" />
        </svg>
        <div className="relative flex items-center gap-[2px]">
          <button type="button" aria-label="Démarrer" className="flex w-[37px] justify-center">
            <svg viewBox="0 0 20 18" className="h-[18px] w-5" fill="#fff">
              <path d="M0 2.500l8-1.200v7.200H0zM9 1.100L20 0v8.500H9zM0 9.500h8v7.200l-8-1.200zM9 9.500h11V18L9 16.900z" />
            </svg>
          </button>
          <Task label="Internet Explorer">
            <circle cx="12" cy="13" r="7" fill="none" stroke="#35b4ea" strokeWidth="4.500" />
            <path d="M7 13h13" stroke="#8bdcf8" strokeWidth="3" />
            <path d="M15 15h7v3h-7z" fill="#437469" />
            <path d="M4 22C-1 20 7 5 18 2c4-1 5 1 4 4" fill="none" stroke="#f5c52b" strokeWidth="2.200" />
          </Task>
          <Task label="Explorateur" open>
            <path d="M1 3h9l2 3h11v15H1z" fill="#e8c25c" />
            <path d="M2 6h20v15H2z" fill="#fbe9a8" stroke="#d9b24c" strokeWidth=".6" />
            <path d="M4 3h3M12 5h4" stroke="#3fa34a" strokeWidth="1.500" />
            <path d="M9 4h2M17 6h3" stroke="#d8432b" strokeWidth="1.500" />
            <path d="M4 24v-9h16v9h-4v-5H8v5z" fill="#8fd0f0" stroke="#4f9fc8" strokeWidth=".7" />
          </Task>
          <Task label="Lecteur vidéo">
            <rect x="2" y="4" width="20" height="17" rx="6" fill="#9b8f90" />
            <rect x="3.500" y="5" width="17" height="14" rx="5" fill="#6b0f16" stroke="#2a0508" />
            <path d="M9 8l7 4-7 4z" fill="none" stroke="#c98080" strokeWidth="1.200" />
          </Task>
          <Task label="Messagerie">
            <path d="M3 3h20v15l-2 3H1V6z" fill="#c3ccda" />
            <path d="M4 5h17v12l-1 2H3V7z" fill="#23499a" />
            <path d="M10 7h9v6h-5l-3 2v-2h-1zM5 11h7v4H9l-3 2v-2H5z" fill="#fff" stroke="#23499a" strokeWidth=".5" />
          </Task>
          <Task label="Chrome" open>
            <circle cx="12" cy="12" r="11" fill="#f7c928" />
            <path d="M12 12L2.500 6.500A11 11 0 0 1 21.500 6.500H12z" fill="#dc4437" />
            <path d="M12 12l4 3-5 8A11 11 0 0 1 2.500 6.500z" fill="#1ea05c" />
            <circle cx="12" cy="12" r="5.500" fill="#fff" />
            <circle cx="12" cy="12" r="4.300" fill="#4587f3" />
          </Task>
          <Task label="Navigation">
            <circle cx="12" cy="12" r="11" fill="#f08a1c" />
            <circle cx="12" cy="12" r="5" fill="none" stroke="#fff" strokeWidth="2" />
            <path d="M12 3.500v17M3.500 12h17M6 6l12 12M18 6L6 18" stroke="#fff" strokeWidth="1.500" strokeDasharray="3.500 10 3.500" />
            <circle cx="12" cy="12" r="1.800" fill="#fff" />
          </Task>
          <Task label="OpenOffice Writer" open>
            <path d="M3 4h13v20H3z" fill="#2b4c6c" />
            <path d="M8 8h10l5 5v10H8z" fill="#f5f9fc" stroke="#2b4c6c" />
            <path d="M11 13h6M11 16h9M11 19h9M11 21.500h6" stroke="#4a7fae" strokeWidth="1.200" />
            <path d="M1 5c4-4 7-2 9 0 2-4 6-5 10-3-4 0-6 2-9 5-3-3-6-3-10-2z" fill="#fff" stroke="#45627c" strokeWidth=".7" />
            <path d="M1 11c4-3 6-2 8 0 1-3 4-4 7-3" fill="none" stroke="#fff" strokeWidth="1.500" />
          </Task>
        </div>
        <div className="relative ml-auto flex items-center gap-[6px] pr-3">
          <svg viewBox="0 0 6 4" className="mt-px mr-1 h-1 w-[6px]" fill="#fff" aria-hidden="true">
            <path d="M3 0l3 4H0z" />
          </svg>
          <svg viewBox="0 0 12 12" className="size-3" fill="#fff" aria-hidden="true">
            <path fillRule="evenodd" d="M6 1h1.500V0h2v1H11v11H6zM7 2.500v8h3v-8z" />
            <path d="M1 0h1v2h1V0h1v2h1v3L3.500 6v5.500h-2V6L0 5V2h1z" />
          </svg>
          <svg viewBox="0 0 12 12" className="size-3" fill="none" stroke="#fff" aria-hidden="true">
            <path d="M0 4h2l3-3v10L2 8H0z" fill="#fff" />
            <path d="M7 4q1 2 0 4M8.500 2.500q2 3.500 0 7M10 1q3 5 0 10" strokeWidth=".8" />
          </svg>
          <svg viewBox="0 0 12 10" className="h-[10px] w-3" fill="#fff" aria-hidden="true">
            <path d="M0 8h2v2H0zM2.500 6.500h2V10h-2zM5 4.500h2V10H5zM7.500 2.500h2V10h-2zM10 0h2v10h-2z" />
          </svg>
          <time className="ml-2 text-center leading-[13px] text-white">
            12:15
            <br />
            17/01/2020
          </time>
        </div>
      </div>
    </div>
  );
}
